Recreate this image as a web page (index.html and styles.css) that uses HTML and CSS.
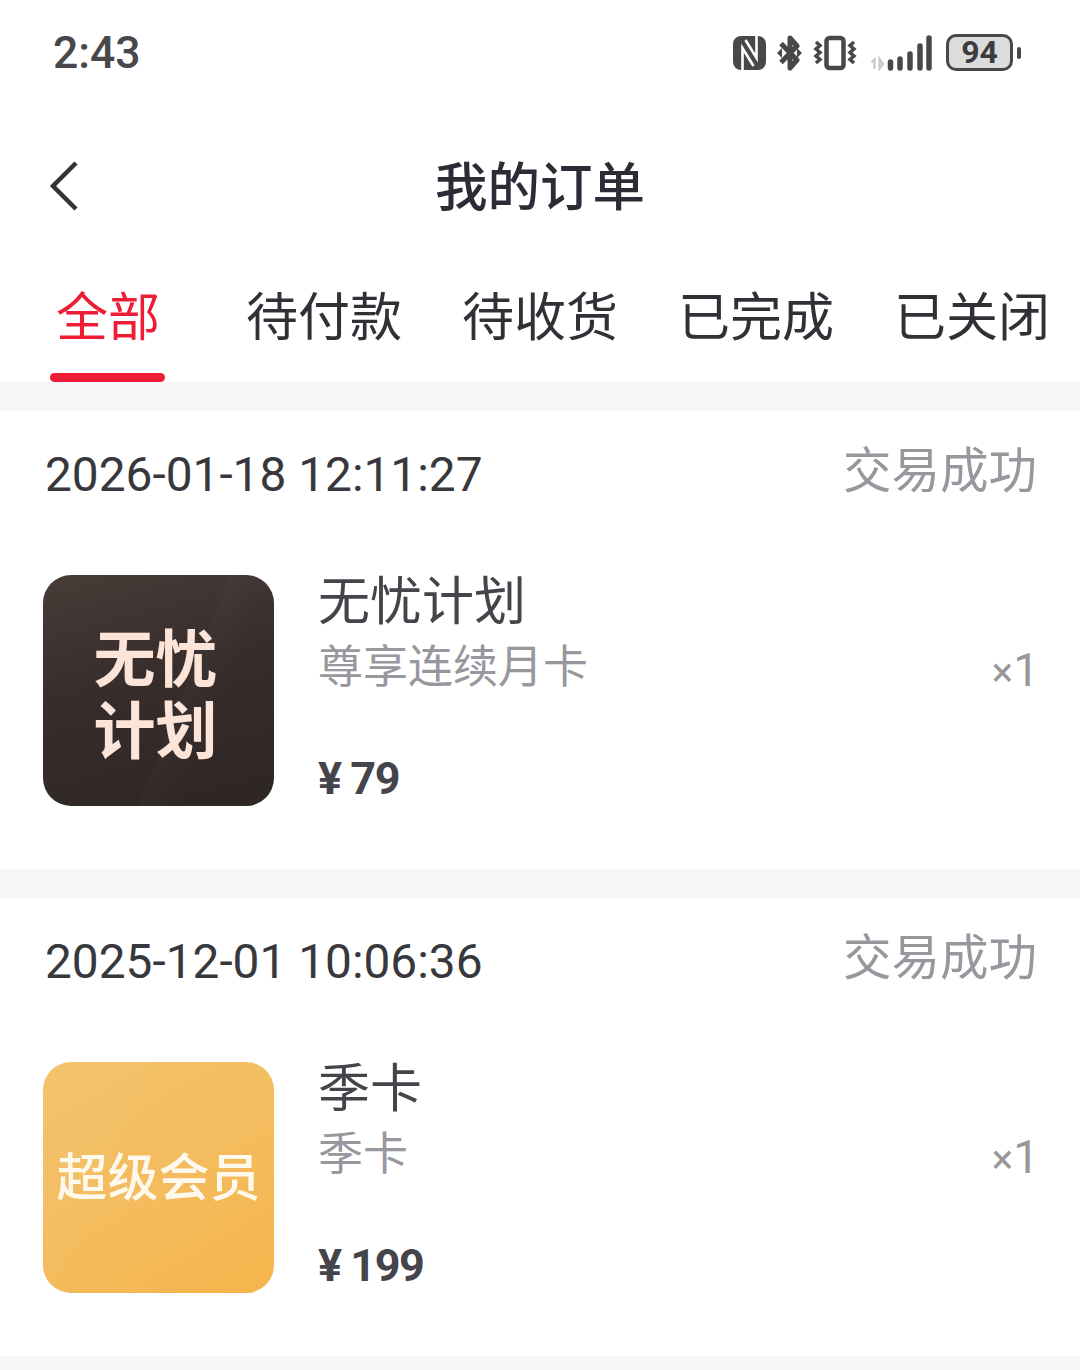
FILE: index.html
```html
<!DOCTYPE html>
<html lang="zh-CN">
	<head>
		<meta charset="UTF-8" />
		<title>我的订单</title>
		<link rel="stylesheet" href="styles.css">
	</head>
	<body>
		<div class="status-bar">
			<span class="clock">2:43</span>
			<div class="status-icons">
				<svg class="ic-nfc" width="33" height="34" viewBox="0 0 33 34">
					<rect width="33" height="34" rx="8" fill="#48484a"/>
					<path d="M9.500 34V12L20.500 30M23.500 0V22L12.500 4" stroke="#fff" stroke-width="2.600" fill="none"/>
				</svg>
				<svg class="ic-bt" width="25" height="36" viewBox="0 0 25 36">
					<path d="M4 8.500L20 25l-7 8V3l7 8L4 27.500" stroke="#48484a" stroke-width="5" fill="none" stroke-linejoin="round"/>
					<path d="M0 18l5-5v10zM25 18l-5-5v10z" fill="#48484a"/>
				</svg>
				<svg class="ic-vib" width="44" height="36" viewBox="0 0 44 36">
					<rect x="13.500" y="3" width="17" height="30" rx="3" stroke="#48484a" stroke-width="4.500" fill="none"/>
					<path d="M3 7l4 3.500-4 3.500 4 3.500-4 3.500 4 3.500-4 3.500M41 7l-4 3.500 4 3.500-4 3.500 4 3.500-4 3.500 4 3.500" stroke="#48484a" stroke-width="3.500" fill="none"/>
				</svg>
				<svg class="ic-signal" width="63" height="36" viewBox="0 0 63 36">
					<path d="M4.500 34V24.500L1.500 27.500M9.500 24v10l3.500-5z" stroke="#c8c8c8" stroke-width="2.200" fill="none"/>
					<g stroke="#48484a" stroke-width="5.500" stroke-linecap="round">
						<path d="M20.500 33v-6M30 33v-9M40 33v-14M50 33V11M59 33V3"/>
					</g>
				</svg>
				<div class="battery">
					<div class="battery-body">94</div>
					<div class="battery-cap"></div>
				</div>
			</div>
		</div>

		<div class="nav">
			<svg class="back" width="30" height="50" viewBox="0 0 30 50">
				<path d="M27 2L4 25l23 23" stroke="#333338" stroke-width="4.500" fill="none"/>
			</svg>
			<h1>我的订单</h1>
		</div>

		<div class="tabs">
			<div class="tab active">全部</div>
			<div class="tab">待付款</div>
			<div class="tab">待收货</div>
			<div class="tab">已完成</div>
			<div class="tab">已关闭</div>
		</div>

		<div class="order">
			<div class="order-head">
				<span class="order-date">2026-01-18 12:11:27</span>
				<span class="order-state">交易成功</span>
			</div>
			<div class="order-body">
				<div class="cover cover-dark">无忧<br>计划</div>
				<div class="info">
					<div class="name">无忧计划</div>
					<div class="sub">尊享连续月卡</div>
					<div class="price">¥ 79</div>
				</div>
				<div class="qty"><small>×</small>1</div>
			</div>
		</div>

		<div class="order">
			<div class="order-head">
				<span class="order-date">2025-12-01 10:06:36</span>
				<span class="order-state">交易成功</span>
			</div>
			<div class="order-body">
				<div class="cover cover-gold">超级会员</div>
				<div class="info">
					<div class="name">季卡</div>
					<div class="sub">季卡</div>
					<div class="price">¥ 199</div>
				</div>
				<div class="qty"><small>×</small>1</div>
			</div>
		</div>
	</body>
</html>
```

FILE: styles.css
```css
* {
	margin: 0;
	padding: 0;
	box-sizing: border-box;
}

body {
	font-family: 'Noto Sans CJK SC', sans-serif;
	background: #f5f6f8;
	color: #303036;
	height: 1370px;
	overflow: hidden;
}

.status-bar {
	height: 105px;
	background: #fff;
	display: flex;
	align-items: center;
	justify-content: space-between;
	padding: 0 59px 0 53px;
}

.clock {
	font-family: 'Roboto', sans-serif;
	font-size: 44.500px;
	font-weight: 500;
	color: #48484a;
}

.status-icons {
	display: flex;
	align-items: center;
	gap: 11px;
}

.ic-signal {
	margin-left: 2px;
}

.battery {
	display: flex;
	align-items: center;
	gap: 4px;
	margin-left: 2px;
}

.battery-body {
	width: 67px;
	height: 37px;
	border: 3px solid #48484a;
	border-radius: 10px;
	background: #dcdcdc;
	font-family: 'Roboto', sans-serif;
	font-size: 32px;
	font-weight: 700;
	line-height: 30px;
	text-align: center;
	color: #3c3c3e;
}

.battery-cap {
	width: 4px;
	height: 12px;
	border-radius: 2px;
	background: #48484a;
}

.nav {
	height: 160px;
	background: #fff;
	display: flex;
	align-items: center;
	justify-content: center;
	position: relative;
}

.back {
	position: absolute;
	left: 49px;
	top: 56px;
}

h1 {
	font-size: 52.500px;
	font-weight: 500;
	line-height: 72px;
	margin-bottom: 4px;
	color: #2c2c36;
}

.tabs {
	height: 117px;
	background: #fff;
	display: flex;
}

.tab {
	width: 217px;
	padding-top: 13px;
	text-align: center;
	font-size: 52px;
	line-height: 72px;
	position: relative;
}

.active {
	color: #ee1c34;
}

.active::after {
	content: '';
	position: absolute;
	left: 50px;
	bottom: 0;
	width: 115px;
	height: 9px;
	border-radius: 5px;
	background: #ee1c34;
}

.order {
	margin-top: 29px;
	height: 458px;
	background: #fff;
}

.order-head {
	display: flex;
	align-items: center;
	justify-content: space-between;
	height: 124px;
	padding: 0 43px 0 45px;
}

.order-date {
	font-family: 'Roboto', sans-serif;
	font-size: 47.800px;
	margin-top: 3px;
	color: #38383c;
}

.order-state {
	font-size: 48.500px;
	line-height: 60px;
	margin-bottom: 12px;
	color: #97979d;
}

.order-body {
	display: flex;
	align-items: center;
	padding: 40px 41px 0 43px;
}

.cover {
	width: 231px;
	height: 231px;
	border-radius: 28px;
	flex-shrink: 0;
	display: flex;
	align-items: center;
	justify-content: center;
	text-align: center;
}

.cover-dark {
	display: block;
	background:
		linear-gradient(112deg, transparent 58%, rgba(255, 255, 255, 0.02) 58%, transparent 72%),
		linear-gradient(165deg, #483c38 0%, #372d2b 45%, #2d2625 100%);
	color: #fde4d8;
	font-size: 62px;
	font-weight: 700;
	line-height: 72px;
	padding: 44px 6px 0 0;
}

.cover-gold {
	background:
		linear-gradient(114deg, rgba(255, 255, 255, 0.025) 33%, transparent 33%),
		linear-gradient(150deg, #f3c268 0%, #f3bc5e 50%, #f6b44c 100%);
	color: #fff8ec;
	font-size: 51px;
	font-weight: 500;
	padding-bottom: 8px;
}

.info {
	flex: 1;
	padding-left: 45px;
	height: 231px;
	display: flex;
	flex-direction: column;
}

.name {
	font-size: 52px;
	line-height: 58px;
	margin-top: -6px;
	margin-left: -1px;
	color: #44444a;
}

.sub {
	font-size: 45px;
	line-height: 58px;
	margin-top: 8px;
	margin-left: -1px;
	color: #97979d;
}

.price {
	font-family: 'Roboto', sans-serif;
	font-size: 45px;
	font-weight: 700;
	letter-spacing: -1.500px;
	line-height: 56px;
	margin-top: 58px;
	margin-left: -1px;
	color: #44444a;
}

.qty {
	font-family: 'Roboto', sans-serif;
	font-size: 46px;
	color: #97979d;
	margin-bottom: 42px;
}

.qty small {
	font-size: 40px;
}
```
